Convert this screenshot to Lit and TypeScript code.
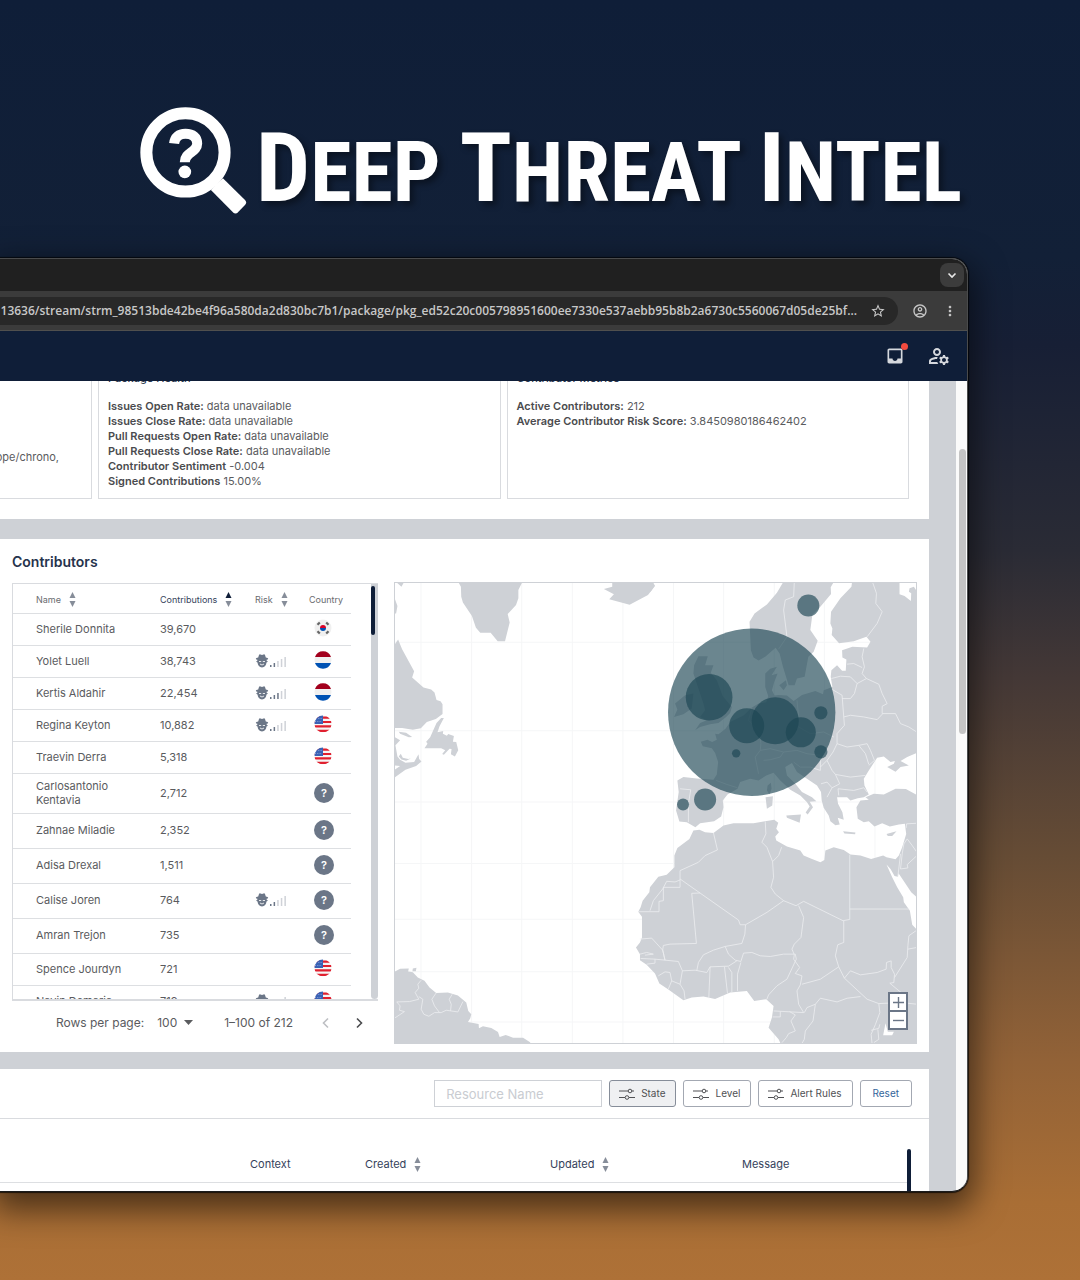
import { LitElement, html, svg, css, nothing } from "lit";
import { customElement, property } from "lit/decorators.js";
import { classMap } from "lit/directives/class-map.js";

type Flag = "kr" | "nl" | "us" | "unknown";

interface Contributor {
  name: string;
  contributions: string;
  flag: Flag;
  /** Number of highlighted bars in the risk meter; absent when there is no risk. */
  risk?: number;
}

const contributors: Contributor[] = [
  { name: "Sherile Donnita", contributions: "39,670", flag: "kr" },
  { name: "Yolet Luell", contributions: "38,743", flag: "nl", risk: 2 },
  { name: "Kertis Aldahir", contributions: "22,454", flag: "nl", risk: 3 },
  { name: "Regina Keyton", contributions: "10,882", flag: "us", risk: 2 },
  { name: "Traevin Derra", contributions: "5,318", flag: "us" },
  { name: "Carlosantonio Kentavia", contributions: "2,712", flag: "unknown" },
  { name: "Zahnae Miladie", contributions: "2,352", flag: "unknown" },
  { name: "Adisa Drexal", contributions: "1,511", flag: "unknown" },
  { name: "Calise Joren", contributions: "764", flag: "unknown", risk: 2 },
  { name: "Amran Trejon", contributions: "735", flag: "unknown" },
  { name: "Spence Jourdyn", contributions: "721", flag: "us" },
  { name: "Navin Demaria", contributions: "719", flag: "us", risk: 1 },
];

const health: [string, string][] = [
  ["Issues Open Rate:", "data unavailable"],
  ["Issues Close Rate:", "data unavailable"],
  ["Pull Requests Open Rate:", "data unavailable"],
  ["Pull Requests Close Rate:", "data unavailable"],
  ["Contributor Sentiment", "-0.004"],
  ["Signed Contributions", "15.00%"],
];

const metrics: [string, string][] = [
  ["Active Contributors:", "212"],
  ["Average Contributor Risk Score:", "3.8450980186462402"],
];

const address =
  "13636/stream/strm_98513bde42be4f96a580da2d830bc7b1/package/pkg_ed52c20c005798951600ee7330e537aebb95b8b2a6730c5560067d05de25bf...";

/* ---------- icons ---------- */

const magnifier = html`<svg class="brand-icon" viewBox="60 52 320 320" aria-hidden="true">
  <circle cx="196" cy="188" r="117" fill="none" stroke="#fff" stroke-width="36" />
  <path d="M272 300 L308 265 L374 330 Q381 337 374 345 L353 367 Q346 374 338 367Z" fill="#fff" />
  <path
    d="M162 161 C164 142 176 132 196 132 C218 132 231 143 231 161 C231 188 194 187 194 217"
    fill="none" stroke="#fff" stroke-width="30" />
  <circle cx="194" cy="246" r="19" fill="#fff" />
</svg>`;

const glyph = (d: string, size: string) =>
  html`<svg class=${size} viewBox="0 0 24 24" fill="currentColor" aria-hidden="true"><path d=${d} /></svg>`;

const starPath =
  "M22 9.24l-7.19-.62L12 2 9.19 8.63 2 9.24l5.46 4.73L5.82 21 12 17.27 18.18 21l-1.63-7.03L22 9.24zM12 15.4l-3.76 2.27 1-4.28-3.32-2.88 4.38-.38L12 6.1l1.71 4.04 4.38.38-3.32 2.88 1 4.28L12 15.4z";
const accountPath =
  "M12 2C6.48 2 2 6.48 2 12s4.48 10 10 10 10-4.48 10-10S17.52 2 12 2zM7.35 18.5C8.66 17.56 10.26 17 12 17s3.34.56 4.65 1.5c-1.31.94-2.91 1.5-4.65 1.5s-3.34-.56-4.65-1.5zm10.79-1.38C16.45 15.8 14.32 15 12 15s-4.45.8-6.14 2.12C4.7 15.73 4 13.95 4 12c0-4.42 3.58-8 8-8s8 3.58 8 8c0 1.95-.7 3.73-1.86 5.12zM12 6c-1.93 0-3.5 1.57-3.5 3.5S10.07 13 12 13s3.5-1.57 3.5-3.5S13.93 6 12 6zm0 5c-.83 0-1.5-.67-1.5-1.5S11.17 8 12 8s1.5.67 1.5 1.5S12.83 11 12 11z";
const dotsPath =
  "M12 8c1.1 0 2-.9 2-2s-.9-2-2-2-2 .9-2 2 .9 2 2 2zm0 2c-1.1 0-2 .9-2 2s.9 2 2 2 2-.9 2-2-.9-2-2-2zm0 6c-1.1 0-2 .9-2 2s.9 2 2 2 2-.9 2-2-.9-2-2-2z";
const inboxPath =
  "M19 3H5c-1.1 0-2 .9-2 2v14c0 1.1.9 2 2 2h14c1.1 0 2-.9 2-2V5c0-1.1-.9-2-2-2zm0 12h-4c0 1.66-1.35 3-3 3s-3-1.34-3-3H5V5h14v10z";
const managePath =
  "M4 18v-.65c0-.34.16-.66.41-.81C6.1 15.53 8.03 15 10 15c.03 0 .05 0 .08.01.1-.7.3-1.37.59-1.98-.22-.02-.44-.03-.67-.03-2.42 0-4.68.67-6.61 1.82-.88.52-1.39 1.5-1.39 2.53V20h9.26c-.42-.6-.75-1.28-.97-2H4zM10 12c2.21 0 4-1.79 4-4s-1.79-4-4-4-4 1.79-4 4 1.79 4 4 4zm0-6c1.1 0 2 .9 2 2s-.9 2-2 2-2-.9-2-2 .9-2 2-2zM20.75 16c0-.22-.03-.42-.06-.63l1.14-1.01-1-1.73-1.45.49c-.32-.27-.68-.48-1.08-.63L18 11h-2l-.3 1.49c-.4.15-.76.36-1.08.63l-1.45-.49-1 1.73 1.14 1.01c-.03.21-.06.41-.06.63s.03.42.06.63l-1.14 1.01 1 1.73 1.45-.49c.32.27.68.48 1.08.63L16 21h2l.3-1.49c.4-.15.76-.36 1.08-.63l1.45.49 1-1.73-1.14-1.01c.03-.21.06-.41.06-.63zM17 18c-1.1 0-2-.9-2-2s.9-2 2-2 2 .9 2 2-.9 2-2 2z";

const chevron = (d: string) => html`<svg class="chevron" viewBox="0 0 12 12" aria-hidden="true">
  <path d=${d} fill="none" stroke="currentColor" stroke-width="1.6" />
</svg>`;

const sliders = html`<svg class="sliders" viewBox="0 0 16 12" fill="none" stroke="currentColor" aria-hidden="true">
  <path d="M0 3H9M13 3H15M0 9.500H6M10 9.500H16" stroke-width="1.200" />
  <circle cx="11" cy="3" r="1.800" />
  <circle cx="8" cy="9.500" r="1.800" />
</svg>`;

const detective = html`<svg class="detective" viewBox="0 0 14 14" aria-hidden="true">
  <path
    d="M4 1 Q4.500 0 5.500 .500 L7 1 L8.500 .500 Q9.500 0 10 1 L10.800 3.600 Q13.200 4 13.200 4.800 Q13 5.600 11.600 5.800 L11.800 7 Q13 7.200 12.800 7.800 L11.500 8.500 Q11 12.800 7 13.500 Q3 12.800 2.500 8.500 L1.200 7.800 Q1 7.200 2.200 7 L2.400 5.800 Q1 5.600 .800 4.800 Q.800 4 3.200 3.600Z"
    fill="#6b7687" />
  <path d="M4 7.500H6.200M7.800 7.500H10M5 10Q7 12 9 10" stroke="#e6e8eb" fill="none" />
</svg>`;

const riskMeter = (level: number) => html`<span class="risk">
  ${detective}
  <svg class="bars" viewBox="0 0 17 11" aria-hidden="true">
    ${[2, 4, 6, 8, 10].map(
      (h, i) => svg`<rect x=${i * 3.6} y=${11 - h} width="1.500" height=${h}
        fill=${i < level ? "#6b7687" : "#cfd2d8"} />`
    )}
  </svg>
</span>`;

const flagIcons: Record<Flag, unknown> = {
  kr: html`<svg class="flag" viewBox="0 0 18 18" role="img" aria-label="South Korea">
    <circle cx="9" cy="9" r="8.500" fill="#f0f0f0" />
    <path d="M6 9a3 3 0 0 1 6 0z" fill="#d80027" />
    <path d="M6 9a3 3 0 0 0 6 0z" fill="#0052b4" />
    <path d="M3.500 5.800 5.800 3.500M12.200 3.500 14.500 5.800M3.500 12.200 5.800 14.500M12.200 14.500 14.500 12.200" stroke="#666" stroke-width="2.200" />
  </svg>`,
  nl: html`<svg class="flag" viewBox="0 0 18 18" role="img" aria-label="Netherlands">
    <circle cx="9" cy="9" r="8.500" fill="#f0f0f0" />
    <path d="M1 6a8.500 8.500 0 0 1 16 0z" fill="#a2001d" />
    <path d="M1 12a8.500 8.500 0 0 0 16 0z" fill="#0052b4" />
  </svg>`,
  us: html`<svg class="flag" viewBox="0 0 18 18" role="img" aria-label="United States">
    <clipPath id="disc"><circle cx="9" cy="9" r="8.500" /></clipPath>
    <g clip-path="url(#disc)">
      <rect width="18" height="18" fill="#f5f5f5" />
      <path d="M0 2.600H18M0 7H18M0 11.400H18M0 15.800H18" stroke="#e0202f" stroke-width="2.200" />
      <rect width="9" height="9" fill="#3a62b5" />
      <path d="M2 3.500H8M1 6.500H8" stroke="#9fb3de" stroke-width=".8" stroke-dasharray="1 1.300" />
    </g>
  </svg>`,
  unknown: html`<span class="unknown" aria-label="Unknown country">?</span>`,
};

/* ---------- map ---------- */

const meridians = [421.5, 472, 522, 572.5, 623, 673.5, 723.5, 774, 824, 874.5];
const parallels = [642, 730.5, 801.5, 863, 918.5, 971, 1021];

const bubbles: [number, number, number][] = [
  [751.5, 712, 83.5], [709, 697, 23.3], [746.5, 725.5, 17.5], [775, 720.5, 23.5],
  [800.5, 732, 15], [820.5, 712.5, 6.6], [820.5, 751.5, 6.6], [736, 753, 4.2],
  [705, 799, 11], [683, 804, 6], [808, 605.5, 11],
];

interface Sheet {
  origin: string;
  land: string;
  water?: string;
  borders?: string;
}

const sheets: Sheet[] = [
  {
    origin: "390 570",
    land: `M20 36L36 50L44 36Z M12 75L24 108L20 130L12 130Z
      M206 36L214 50L215 80L220 97L247 138L259 173L272 188L303 188L324 213L346 213L360 157L354 132L379 105L386 85L386 60L398 36Z
      M667 36L667 50L642 57L672 73L658 88L719 104L774 75L795 48L789 36Z
      M12 228L26 208L38 237L74 303L68 322L102 352L125 358L135 367L141 389L153 393L159 402L159 431L139 446L112 455L94 474L70 478L38 473L12 473Z
      M163 443L155 443L141 458L122 501L110 514L114 520L105 534L155 534L167 540L158 551L163 553L180 535L186 536L184 552L196 558L206 540L200 515L190 514L193 497L176 491L172 496L160 490L161 482L144 486L150 468Z
      M28 484L50 487L68 500L58 501L32 490Z
      M12 498L32 510L18 525L24 558L32 568L48 577L74 575L87 552L89 566L96 573L80 587L48 598L12 624L12 600L32 587L12 585Z
      M34 550L40 562L56 566L64 564L50 571L36 567L28 558Z`,
  },
  {
    origin: "650 570",
    land: `M0 36L14 46L4 62L0 66Z
      M399 36L380 68L350 103L313 130L298 155L302 240L310 262L325 271L345 260L376 233L388 250L398 290L415 345L433 345L440 325L463 320L474 260L490 245L502 212L480 180L486 135L510 110L542 72L541 52L550 36Z
      M605 36L603 50L570 85L542 125L540 160L546 175L544 195L566 219L610 213L648 200L660 215L650 232L606 230L575 240L576 262L588 268L586 302L575 302L560 285L543 300L541 320L546 350L520 360L518 372L495 362L455 374L430 392L410 376L385 374L373 376L365 360L372 335L382 310L364 315L380 290L360 296L345 310L345 350L354 378L348 396L325 400L305 412L280 436L240 455L226 475L205 492L195 490L200 508L186 515L172 508L152 514L158 528L185 534L195 548L204 575L200 612L190 628L140 624L100 620L82 630L86 665L78 720L88 753L110 755L136 770L150 758L192 752L213 738L220 710L218 690L232 672L262 655L270 635L300 625L325 630L348 615L370 607L390 630L420 658L450 675L470 695L478 708L466 726L472 732L488 710L478 694L498 692L485 680L455 665L435 640L410 615L405 590L425 578L440 605L470 625L500 645L512 665L514 690L520 712L535 735L540 752L555 764L568 762L562 742L580 748L576 725L563 700L560 680L590 680L600 690L622 683L640 680L655 672L642 645L640 625L655 600L680 562L700 558L720 575L733 572L730 580L710 590L735 604L750 590L775 585L750 572L770 560L802 546L802 36Z
      M145 258L173 258L165 285L190 285L182 308L200 330L218 378L245 410L240 428L228 440L205 458L180 462L150 470L135 480L150 458L170 450L150 440L165 420L160 400L150 370L140 340L130 310L132 285Z
      M105 375L130 370L125 415L100 432L72 440L82 418L75 400Z
      M387 345L407 330L410 345L400 360Z
      M352 645L362 637L364 655L358 672L350 660Z M346 680L368 677L366 705L350 715Z
      M408 735L452 732L448 757L410 742Z`,
    water: `M747 36L747 73L762 78L781 93L782 70L775 65L777 55L790 50L800 66L800 36Z`,
    borders: `M432 36L430 80L405 90L400 120L410 200L385 237
      M666 36L678 70L676 100L695 125L680 160L650 200M640 235L635 260L642 290L635 310L648 325L685 342L695 370L710 400L695 408L695 430L735 430L750 460L775 470L800 486
      M590 282L610 280L635 292M543 325L570 318L600 320L620 340L648 325M620 340L612 370L600 385L575 385
      M541 355L575 375L580 440L600 435L640 440L680 448L697 430M580 440L582 465L560 490L560 520L590 530L625 525L650 520L660 540L672 570L655 585M625 525L645 550L655 582
      M560 520L548 545L530 570L545 600L555 612L600 620L645 615M530 570L510 590M555 612L568 640L545 652L530 680M545 652L530 635L512 640M563 655L565 675M563 655L610 660L640 652L650 665
      M330 500L332 520L330 540L315 560L325 610M330 540L360 535L400 545L440 540L470 550L510 555M440 390L445 440L425 450L445 470L480 490L520 485L550 500M198 630L230 642L262 652M90 655L122 658L115 700L115 755M400 545L390 560L360 568L340 570M430 575L450 590L480 590L510 600L510 560M305 412L295 450L335 490`,
  },
  {
    origin: "620 790",
    land: `M891 15L856 -4L825 -5L790 12L760 10L735 20L745 28L720 30L708 50L712 85L730 95L745 92L762 108L785 98L808 108L835 102L853 100L857 130L845 170L835 195L825 206L798 200L788 195L752 205L720 195L690 192L670 178L640 170L615 180L612 208L600 215L575 205L550 195L540 180L500 168L468 150L465 138L476 125L468 115L474 97L462 88L430 93L400 98L340 98L310 105L280 127L255 125L238 118L220 120L208 145L172 172L163 195L163 230L140 252L115 258L90 290L88 305L68 330L62 350L55 363L66 378L66 440L60 455L48 470L60 490L60 508L80 522L105 548L118 578L145 596L190 628L215 620L250 617L285 624L330 605L380 600L402 630L438 625L460 645L455 680L445 710L475 745L484 764L891 764Z
      M668 122L705 126L704 131L672 129Z M798 130L828 122L815 136L802 136Z`,
    water: `M798 222L810 235L822 256L832 258L834 248L850 272L872 305L891 322L891 419L875 402L868 360L850 335L848 320L830 290L815 260Z
      M795 697L788 733L815 733L820 722L802 722Z`,
    borders: `M280 127L292 178L255 195L235 215L180 240L180 290L130 290L130 330L117 332L117 363L55 363
      M90 360L100 330L128 295L140 272L165 274L180 268M180 265L355 388L360 402L376 402L440 365L490 330
      M240 307L215 308L229 458L150 460L130 464M435 93L437 130L425 155L440 170L457 213L460 260L452 290L465 310L490 330L527 345L550 332L668 390L688 386L688 192
      M484 170L475 195L457 213M688 355L866 355M670 390L670 455L652 462L645 495L655 528
      M376 402L374 430L365 458L315 467L280 478L250 492L235 515L230 540M535 345L550 380L542 440L522 460L515 475L522 492
      M315 467L325 490L345 508L362 512M130 464L128 478L135 508L175 512L187 540L225 538L260 545L270 528L325 526L350 510
      M60 445L95 442L128 478L135 508M60 490L80 485L100 490L75 493M62 503L105 505L135 508M80 520L105 517L105 505
      M115 555L135 543L150 545L155 570L145 594M155 570L180 580L187 540M180 580L192 600L195 625M270 528L266 622
      M313 528L322 608M325 530L335 545L335 605M362 515L352 550L352 600M362 512L370 487L395 485L420 495L450 497L490 490L525 490L528 505L500 565L470 585L445 612L440 625
      M522 492L520 505L538 530L525 548L545 555L540 582L530 600L535 640L550 665L460 660M545 580L600 565L655 528L672 562L740 625L775 638L840 635L891 640
      M552 665L560 650L585 640L600 622L650 633L680 622L720 617M585 640L578 690L555 720L552 745L545 757
      M672 562L690 540L720 552L770 545L797 535L798 515L812 510L812 530L822 550L820 575L808 577L850 612
      M889 418L865 435L862 465L860 500L822 560M862 475L889 470M775 638L778 665L765 700L752 730L755 760M752 718L775 712L778 700M760 755L775 745L772 715
      M457 678L480 678L480 662M508 662L525 672L512 690L525 720L505 728L498 740L485 755
      M891 98L858 100L857 112M889 185L875 165L860 145L850 160L845 190L840 235L862 232L860 222L889 195M832 258L840 190`,
  },
  {
    origin: "380 930",
    land: `M40 125L62 114L88 113L86 122L100 124L115 140L135 150L150 170L170 186L205 185L235 194L260 215L266 240L275 250L272 262L265 273L297 279L298 292L310 286L335 291L355 303L360 318L378 312L400 320L430 320L450 333L458 343L40 343Z
      M100 113L111 111L109 121L99 121Z`,
    borders: `M125 148L115 160L118 172L107 185L118 205L90 212L52 213L62 225L60 238L75 242L45 262
      M118 197L130 205L125 235L133 250L148 256L165 245L185 245L200 238L235 243L250 212M170 186L157 205L165 225L180 245M218 190L209 205L215 220L213 240`,
  },
];

@customElement("bubble-map")
export class BubbleMap extends LitElement {
  static styles = css`
    :host {
      display: block;
      position: relative;
      overflow: hidden;
      border: 1px solid #ced1d6;
    }
    .canvas {
      display: block;
      width: 100%;
      height: 100%;
    }
    .zoom {
      position: absolute;
      right: 8px;
      bottom: 13px;
      display: grid;
      gap: 2px;
      padding: 2px;
      background: #6b7687;
    }
    .zoom-button {
      display: grid;
      place-items: center;
      width: 16px;
      height: 16px;
      padding: 0;
      border: 0;
      background: #fff;
      color: #6b7687;
    }
    .sign {
      width: 13px;
      height: 13px;
    }
  `;

  render() {
    return html`
      <svg class="canvas" viewBox="395 583 521 459" preserveAspectRatio="xMidYMid slice" role="img" aria-label="Contributors by location">
        <g stroke="#f5f6f7">
          ${meridians.map((x) => svg`<path d="M${x} 580V1046" />`)}
          ${parallels.map((y) => svg`<path d="M390 ${y}H920" />`)}
        </g>
        ${sheets.map(
          (s) => svg`<g transform="translate(${s.origin}) scale(.33333)">
            <path d=${s.land} fill="#ced1d6" />
            ${s.water ? svg`<path d=${s.water} fill="#fff" />` : nothing}
            ${s.borders
              ? svg`<path d=${s.borders} fill="none" stroke="#eceef0" stroke-width="2.400" stroke-linejoin="round" />`
              : nothing}
          </g>`
        )}
        <g fill="#1c4553" fill-opacity=".65">
          ${bubbles.map(([x, y, r]) => svg`<circle cx=${x} cy=${y} r=${r} />`)}
        </g>
      </svg>
      <div class="zoom">
        <button class="zoom-button" aria-label="Zoom in">
          <svg class="sign" viewBox="0 0 13 13" stroke="currentColor" stroke-width="1.400"><path d="M1 6.500H12M6.500 1V12" /></svg>
        </button>
        <button class="zoom-button" aria-label="Zoom out">
          <svg class="sign" viewBox="0 0 13 13" stroke="currentColor" stroke-width="1.400"><path d="M1 6.500H12" /></svg>
        </button>
      </div>
    `;
  }
}

@customElement("sort-label")
export class SortLabel extends LitElement {
  @property() label = "";
  @property({ type: Boolean }) active = false;

  static styles = css`
    :host {
      display: block;
    }
    .sort {
      display: flex;
      align-items: center;
      gap: 8px;
      padding: 0;
      border: 0;
      background: none;
      color: inherit;
      font: inherit;
    }
    .arrows {
      width: 7px;
      height: 15px;
      flex: none;
    }
  `;

  render() {
    return html`<button class="sort">
      ${this.label}
      <svg class="arrows" viewBox="0 0 7 15" aria-hidden="true">
        <path d="M3.500 0 6.500 6H.500Z" fill=${this.active ? "#0f1e38" : "#868d99"} />
        <path d="M3.500 15 6.500 9H.500Z" fill="#868d99" />
      </svg>
    </button>`;
  }
}

@customElement("app-root")
export class AppRoot extends LitElement {
  static styles = css`
    :host {
      display: block;
      box-sizing: border-box;
      min-height: 100vh;
      padding: 0 112px 88px 0;
      overflow: hidden;
      background: linear-gradient(#0f1e38 0%, #122037 20%, #171f35 27%, #2a2b35 43%, #443836 53%, #664c35 67%, #926237 83%, #a96e35 94%, #ae7137 100%);
      font-family: Inter, "Open Sans", sans-serif;
      font-size: 11px;
      line-height: 15px;
      color: #5a5b5e;
    }
    *,
    *::before {
      box-sizing: border-box;
    }

    /* brand */
    .brand {
      display: flex;
      justify-content: flex-end;
      align-items: flex-start;
      gap: 9px;
      height: 258px;
      padding-top: 107px;
      margin-right: 6px;
    }
    .brand-icon {
      width: 107px;
      height: 107px;
      flex: none;
    }
    .brand-name {
      margin: 0;
      white-space: nowrap;
      color: #fff;
      font-family: "Roboto Condensed", "Liberation Sans Narrow", "Liberation Sans", sans-serif;
      font-weight: 700;
      font-size: 84px;
      line-height: 122px;
      text-shadow: 4px 4px 6px rgba(0, 0, 0, 0.4);
    }
    .cap {
      font-size: 96px;
    }

    /* browser window */
    .window {
      overflow: hidden;
      border: 1px solid #4a4b4c;
      border-left: 0;
      border-bottom-color: #1b1b1b;
      border-radius: 0 16px 16px 0;
      background: #ced1d6;
      box-shadow: 0 0 1px 1px rgba(0, 0, 0, 0.7), 0 12px 32px 6px rgba(0, 0, 0, 0.55);
    }
    .tabs {
      display: flex;
      justify-content: flex-end;
      align-items: center;
      height: 32px;
      padding-right: 3px;
      background: #202020;
    }
    .icon-button {
      display: grid;
      place-items: center;
      position: relative;
      padding: 0;
      border: 0;
      background: none;
      color: inherit;
    }
    .tab-menu {
      width: 24px;
      height: 24px;
      border-radius: 8px;
      background: #3c3c3c;
      color: #e8e8e8;
    }
    .toolbar {
      display: flex;
      align-items: center;
      height: 40px;
      padding-right: 9px;
      border-bottom: 1px solid #50504e;
      background: #3b3b3b;
      color: #c7c7c7;
    }
    .omnibox {
      display: flex;
      align-items: center;
      flex: 1;
      gap: 13px;
      height: 28px;
      margin-left: -80px;
      padding-right: 12px;
      border-radius: 14px;
      background: #282828;
    }
    .url {
      flex: 1;
      min-width: 0;
      padding: 0;
      border: 0;
      background: none;
      color: #c7c7c7;
      font: 600 12px/16px "Open Sans", "Liberation Sans", sans-serif;
      text-align: right;
    }
    .tools {
      display: flex;
      gap: 14px;
      margin-left: 14px;
    }
    .i16 {
      width: 16px;
      height: 16px;
    }
    .i20 {
      width: 20px;
      height: 20px;
    }
    .i24 {
      width: 24px;
      height: 24px;
    }
    .appbar {
      display: flex;
      justify-content: flex-end;
      align-items: center;
      gap: 22px;
      height: 50px;
      padding-right: 16px;
      background: #0f1e38;
      color: #d5d8dd;
    }
    .badge {
      position: absolute;
      top: -3px;
      right: -3px;
      width: 7px;
      height: 7px;
      border-radius: 50%;
      background: #f44b3f;
    }

    /* page */
    .page {
      display: flex;
    }
    .content {
      flex: 1;
      min-width: 0;
      padding-right: 27px;
    }
    .gutter {
      width: 11px;
      padding: 68px 1px 0 3px;
      background: #fafafa;
    }
    .gutter-thumb {
      height: 285px;
      border-radius: 4px;
      background: #c4c4c4;
    }
    .section {
      background: #fff;
    }

    .summary {
      display: grid;
      grid-template-columns: 92px 1fr 1fr;
      gap: 6px;
      padding: 0 20px 20px 0;
      margin-bottom: 20px;
      overflow: hidden;
    }
    .card {
      margin-top: -11px;
      padding: 0 9px 9px;
      border: 1px solid #d9dbdf;
    }
    .card-cut {
      display: flex;
      justify-content: flex-end;
      padding: 79px 32px 0 0;
      border-left: 0;
      overflow: hidden;
    }
    .card-title {
      margin: 0 0 13px;
      font-size: 11px;
      line-height: 15px;
      font-weight: 500;
      color: #2b3850;
    }
    .line {
      margin: 0;
    }
    .key {
      font-weight: 600;
      color: #4a4b4e;
    }

    .people {
      display: grid;
      grid-template-columns: 378px 1fr;
      gap: 16px;
      padding: 0 12px 8px 0;
      margin-bottom: 17px;
    }
    .list {
      padding-left: 12px;
    }
    .list-title {
      margin: 0;
      padding: 14px 0 12px;
      font-size: 14px;
      line-height: 18px;
      font-weight: 600;
      color: #26334c;
    }
    .map {
      margin-top: 43px;
    }
    .list-box {
      display: flex;
      justify-content: space-between;
      height: 418px;
      overflow: hidden;
      border: 1px solid #d9dbdf;
      border-bottom-width: 2px;
      border-right: 0;
    }
    .track {
      width: 7px;
      padding-top: 2px;
      background: #ced1d6;
      border-radius: 0 0 4px 4px;
    }
    .thumb {
      width: 4px;
      height: 49px;
      border-radius: 2px;
      background: #0f1e38;
    }
    .grid {
      border-collapse: collapse;
      table-layout: fixed;
      text-align: left;
    }
    .list-grid {
      width: 338px;
    }
    .grid th {
      padding: 0;
      font-weight: 400;
      white-space: nowrap;
      border-bottom: 1px solid #dddfe2;
    }
    .list-grid th {
      height: 29px;
      padding-top: 2px;
      font-size: 9px;
      color: #6a6c70;
    }
    .list-grid .sorted {
      color: #35425b;
    }
    .list-grid td {
      height: 32px;
      padding: 0;
      line-height: 14px;
      border-bottom: 1px solid #dddfe2;
    }
    .list-grid .tall td {
      height: 35px;
      padding-top: 5px;
      padding-bottom: 6px;
    }
    .list-grid .name {
      padding-left: 23px;
      padding-right: 20px;
    }
    .c-name {
      width: 147px;
    }
    .c-count {
      width: 95px;
    }
    .c-risk {
      width: 54px;
    }
    .risk {
      display: flex;
      align-items: center;
      gap: 1px;
    }
    .detective {
      width: 14px;
      height: 14px;
    }
    .bars {
      width: 17px;
      height: 11px;
    }
    .flag {
      display: block;
      width: 18px;
      height: 18px;
      margin: 0 0 2px 5px;
    }
    .unknown {
      display: grid;
      place-items: center;
      width: 20px;
      height: 20px;
      margin-left: 5px;
      border-radius: 50%;
      background: #6b7687;
      color: #fff;
      font-size: 11px;
      font-weight: 600;
    }
    .pager {
      display: flex;
      align-items: center;
      justify-content: flex-end;
      height: 43px;
      padding-right: 13px;
      font-size: 12px;
    }
    .per-page {
      display: flex;
      align-items: center;
      gap: 13px;
      margin-right: 31px;
    }
    .pick {
      display: flex;
      align-items: center;
      gap: 6px;
    }
    .size {
      appearance: none;
      padding: 0;
      border: 0;
      background: none;
      color: inherit;
      font: inherit;
    }
    .caret {
      width: 9px;
      height: 5px;
    }
    .range {
      margin-right: 27px;
    }
    .step {
      color: #4a4b4e;
    }
    .step:disabled {
      color: #bdbfc3;
    }
    .next {
      margin-left: 21px;
    }
    .chevron {
      width: 12px;
      height: 12px;
    }

    .filters {
      display: flex;
      justify-content: flex-end;
      gap: 7px;
      padding: 11px 17px;
      border-bottom: 1px solid #d9dbdf;
    }
    .search {
      width: 168px;
      height: 27px;
      padding: 0 11px;
      border: 1px solid #ced1d6;
      font: 400 13px/16px Inter, "Open Sans", sans-serif;
      color: #505154;
    }
    .search::placeholder {
      color: #c9ccd1;
      opacity: 1;
    }
    .filter {
      display: flex;
      align-items: center;
      gap: 6px;
      height: 27px;
      padding: 0 10px 0 9px;
      border: 1px solid #a3a8b2;
      border-radius: 3px;
      background: #fff;
      color: #505154;
      font: 400 10px/15px Inter, "Open Sans", sans-serif;
    }
    .filter.on {
      border-color: #868d99;
      background: #eff0f2;
    }
    .filter.reset {
      padding: 0 12px;
      color: #34659b;
    }
    .sliders {
      width: 16px;
      height: 12px;
    }
    .events {
      display: flex;
      height: 72px;
      padding: 30px 18px 0 0;
    }
    .events-grid {
      flex: 1;
      height: 34px;
    }
    .events-grid th {
      padding-bottom: 3px;
      color: #35425b;
    }
    .e-lead {
      width: 250px;
    }
    .e-context {
      width: 115px;
    }
    .e-created {
      width: 185px;
    }
    .e-updated {
      width: 192px;
    }
    .events-thumb {
      width: 4px;
      border-radius: 2px 2px 0 0;
      background: #0f1e38;
    }
  `;

  private lines(items: [string, string][]) {
    return items.map(([k, v]) => html`<p class="line"><span class="key">${k}</span> ${v}</p>`);
  }

  private row(c: Contributor) {
    return html`<tr class=${classMap({ tall: c.flag === "unknown" })}>
      <td class="name">${c.name}</td>
      <td>${c.contributions}</td>
      <td>${c.risk ? riskMeter(c.risk) : nothing}</td>
      <td>${flagIcons[c.flag]}</td>
    </tr>`;
  }

  render() {
    return html`
      <header class="brand">
        ${magnifier}
        <h1 class="brand-name"><span class="cap">D</span>EEP <span class="cap">T</span>HREAT <span class="cap">I</span>NTEL</h1>
      </header>

      <main class="window">
        <div class="tabs">
          <button class="icon-button tab-menu" aria-label="Search tabs">${chevron("M2.500 4.500 6 8 9.500 4.500")}</button>
        </div>
        <div class="toolbar">
          <div class="omnibox">
            <input class="url" aria-label="Address" readonly .value=${address} />
            <button class="icon-button" aria-label="Bookmark">${glyph(starPath, "i16")}</button>
          </div>
          <div class="tools">
            <button class="icon-button" aria-label="Profile">${glyph(accountPath, "i16")}</button>
            <button class="icon-button" aria-label="More">${glyph(dotsPath, "i16")}</button>
          </div>
        </div>
        <nav class="appbar">
          <button class="icon-button" aria-label="Inbox">${glyph(inboxPath, "i20")}<span class="badge"></span></button>
          <button class="icon-button" aria-label="Account settings">${glyph(managePath, "i24")}</button>
        </nav>

        <div class="page">
          <div class="content">
            <section class="section summary">
              <div class="card card-cut">ope/chrono,</div>
              <div class="card">
                <h2 class="card-title">Package Health</h2>
                ${this.lines(health)}
              </div>
              <div class="card">
                <h2 class="card-title">Contributor Metrics</h2>
                ${this.lines(metrics)}
              </div>
            </section>

            <section class="section people">
              <div class="list">
                <h2 class="list-title">Contributors</h2>
                <div class="list-box">
                  <table class="grid list-grid">
                    <colgroup>
                      <col class="c-name" />
                      <col class="c-count" />
                      <col class="c-risk" />
                      <col />
                    </colgroup>
                    <thead>
                      <tr>
                        <th class="name"><sort-label label="Name"></sort-label></th>
                        <th class="sorted"><sort-label label="Contributions" active></sort-label></th>
                        <th><sort-label label="Risk"></sort-label></th>
                        <th>Country</th>
                      </tr>
                    </thead>
                    <tbody>
                      ${contributors.map((c) => this.row(c))}
                    </tbody>
                  </table>
                  <div class="track"><div class="thumb"></div></div>
                </div>
                <div class="pager">
                  <div class="per-page">
                    <label for="size">Rows per page:</label>
                    <span class="pick">
                      <select class="size" id="size"><option>100</option></select>
                      <svg class="caret" viewBox="0 0 9 5" aria-hidden="true"><path d="M0 0H9L4.500 5Z" fill="#5b5c5f" /></svg>
                    </span>
                  </div>
                  <span class="range">1–100 of 212</span>
                  <button class="icon-button step" aria-label="Previous page" disabled>${chevron("M8 1.500 3.500 6 8 10.500")}</button>
                  <button class="icon-button step next" aria-label="Next page">${chevron("M4 1.500 8.500 6 4 10.500")}</button>
                </div>
              </div>
              <bubble-map class="map"></bubble-map>
            </section>

            <section class="section">
              <div class="filters">
                <input class="search" aria-label="Resource Name" placeholder="Resource Name" />
                <button class="filter on">${sliders} State</button>
                <button class="filter">${sliders} Level</button>
                <button class="filter">${sliders} Alert Rules</button>
                <button class="filter reset">Reset</button>
              </div>
              <div class="events">
                <table class="grid events-grid">
                  <colgroup>
                    <col class="e-lead" />
                    <col class="e-context" />
                    <col class="e-created" />
                    <col class="e-updated" />
                    <col />
                  </colgroup>
                  <thead>
                    <tr>
                      <th></th>
                      <th>Context</th>
                      <th><sort-label label="Created"></sort-label></th>
                      <th><sort-label label="Updated"></sort-label></th>
                      <th>Message</th>
                    </tr>
                  </thead>
                </table>
                <div class="events-thumb"></div>
              </div>
            </section>
          </div>
          <div class="gutter"><div class="gutter-thumb"></div></div>
        </div>
      </main>
    `;
  }
}
